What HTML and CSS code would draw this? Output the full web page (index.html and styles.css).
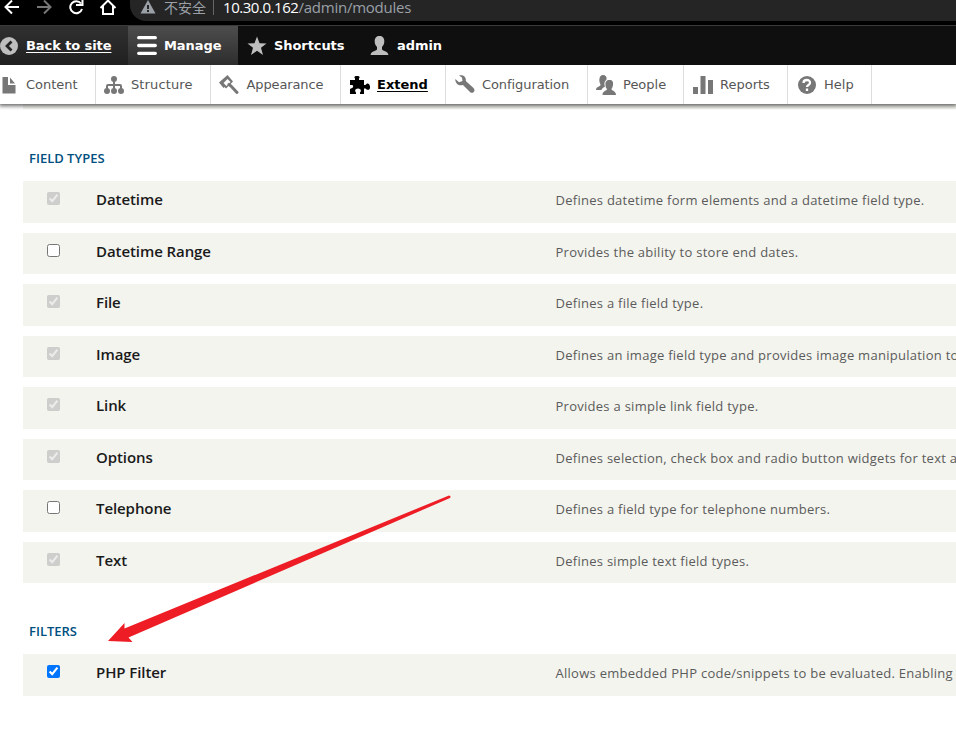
FILE: index.html
```html
<!DOCTYPE html>
<html lang="en">
<head>
<meta charset="utf-8">
<title>Extend</title>
<link rel="stylesheet" href="styles.css">
</head>
<body>
<header class="browser">
  <svg class="nav-icons" width="130" height="25" viewBox="0 0 130 25" fill="none" stroke="#fff" stroke-width="2">
    <path d="M19 7H6M12 .5L5.500 7l6.500 6.500"/>
    <path stroke="#777" d="M37 7h13M44 .5L50.500 7 44 13.500"/>
    <path d="M81 3.500A6 6 0 1 0 82 9M82.500-1v6H76"/>
    <path d="M100.500 8L108 .5l7.500 7.500M103 6v8h10V6"/>
  </svg>
  <div class="address">
    <svg width="16" height="14" viewBox="0 0 16 14"><path fill="#9aa0a6" d="M8 0l7.500 13.500H.5z"/><path stroke="#252526" stroke-width="2" d="M8 5v4M8 10v2"/></svg>
    <span class="insecure">不安全</span><span class="bar"></span>
    <span class="url"><b>10.30.0.162</b>/admin/modules</span>
  </div>
</header>
<nav class="adminbar">
  <a class="tab back"><svg width="18" height="18" viewBox="0 0 18 18"><circle cx="9" cy="9" r="9" fill="#bebebe"/><path d="M11.500 4.500L7 9l4.500 4.500" fill="none" stroke="#222" stroke-width="2.800"/></svg><span class="u">Back to site</span></a>
  <a class="tab manage"><svg width="20" height="19" viewBox="0 0 20 19"><path d="M1.700 1.700h16.600M1.700 9.500h16.600M1.700 17.300h16.600" stroke="#fff" stroke-width="3.300" stroke-linecap="round"/></svg><span>Manage</span></a>
  <a class="tab shortcuts"><svg width="20" height="20" viewBox="0 0 20 20"><path fill="#bebebe" d="M10 .5l2.500 6.700 7 .2-5.500 4.400 2 7.200-6-4.200-6 4.200 2-7.200L.5 7.400l7-.2z"/></svg><span>Shortcuts</span></a>
  <a class="tab user"><svg width="19" height="19" viewBox="0 0 19 19"><path fill="#bebebe" d="M9.500 0c3 0 5 2 4.800 5.500-.1 2.500-1 4-2.300 5.500v2.500c0 1 6 1.500 6.500 5.500H.5c.5-4 6.500-4.500 6.500-5.500V11C5.700 9.500 4.800 8 4.700 5.500 4.500 2 6.500 0 9.500 0z"/></svg><span>admin</span></a>
</nav>
<nav class="tray">
  <a class="item content"><svg width="16" height="18" viewBox="0 0 16 18" fill="#777"><path d="M2.500 1H8v8h7.500v8.500h-13zM10 1.500L15 7.500h-5z"/></svg><span>Content</span></a>
  <a class="item structure"><svg width="20" height="18" viewBox="0 0 20 18" fill="#777"><circle cx="10" cy="3" r="3"/><path d="M9 4h2v4h5q2 0 2 2v3h-2v-3h-5v3H9v-3H4v3H2v-3q0-2 2-2h5z"/><circle cx="3" cy="15" r="3"/><circle cx="10" cy="15" r="3"/><circle cx="17" cy="15" r="3"/></svg><span>Structure</span></a>
  <a class="item appearance"><svg width="20" height="20" viewBox="0 0 20 20"><path d="M0 7.500L8.500 0 14 6.500 7 13.500 5.500 12 4.500 13z" fill="#777"/><path d="M4.500 8L8.500 4l3 3-4 4z" fill="#fff"/><path d="M10 9.500l2 1.500 6 6.500" fill="none" stroke="#777" stroke-width="3" stroke-linecap="round"/></svg><span>Appearance</span></a>
  <a class="item extend"><svg width="20" height="18" viewBox="0 0 20 18"><path d="M0 4h5V2.500C3.500 1 5 0 7 0s3.500 1 2 2.500V4h5v5h1.500c1-2 4-2.500 4.500 1.500s-3 4-4.500 2H14V18h-4v-1.500c1.500-1.500 1-4-2-4s-3.500 2.500-2 4V18H0v-5l2-1c2-1 1-3 0-3L0 9z"/></svg><span class="u">Extend</span></a>
  <a class="item configuration"><svg width="20" height="19" viewBox="0 0 20 19"><path fill="#777" d="M4 .5C8-.8 11.500 2 10.800 6L18.500 13c2.800 3-1 6.500-3.500 4L8 10C4 11.500 0 8 .3 4L4 7.200 7.500 6 7 2.500z"/></svg><span>Configuration</span></a>
  <a class="item people"><svg width="20" height="20" viewBox="0 0 20 20" fill="#777"><path d="M7 0c2.500 0 4 1.500 3.500 4.500C8 6.500 8 9.500 9 11.500c-1.500 1-3 1.500-3.500 3.500H0c0-4 5-3 4.500-5.500C2.500 6 3 0 7 0z"/><path d="M13.500 5c3 0 4 2 3.500 5-.3 2-1 3-1.500 4 0 2 4.500 1.500 4.500 6H6.500c0-4.500 4.500-4 4.500-6-1-1-1.500-2-1.500-4-.5-3 1-5 4-5z"/></svg><span>People</span></a>
  <a class="item reports"><svg width="20" height="18" viewBox="0 0 20 18" fill="#777"><path d="M0 11h5v7H0zM7.500 0h5v18h-5zM15 4h5v14h-5z"/></svg><span>Reports</span></a>
  <a class="item help"><svg width="18" height="18" viewBox="0 0 18 18"><circle cx="9" cy="9" r="9" fill="#777"/><path d="M5.500 7C5.500 3 12.500 3 12 7c-.2 2-3 2-3 4M9 12.500V15" fill="none" stroke="#fff" stroke-width="2.300"/></svg><span>Help</span></a>
</nav>
<main class="page">
  <div class="previous"></div>
  <h2>FIELD TYPES</h2>
  <section class="modules">
    <div class="row"><input type="checkbox" checked disabled><label>Datetime</label><p>Defines datetime form elements and a datetime field type.</p></div>
    <div class="row"><input type="checkbox"><label>Datetime Range</label><p>Provides the ability to store end dates.</p></div>
    <div class="row"><input type="checkbox" checked disabled><label>File</label><p>Defines a file field type.</p></div>
    <div class="row"><input type="checkbox" checked disabled><label>Image</label><p>Defines an image field type and provides image manipulation tools.</p></div>
    <div class="row"><input type="checkbox" checked disabled><label>Link</label><p>Provides a simple link field type.</p></div>
    <div class="row"><input type="checkbox" checked disabled><label>Options</label><p>Defines selection, check box and radio button widgets for text and numeric fields.</p></div>
    <div class="row"><input type="checkbox"><label>Telephone</label><p>Defines a field type for telephone numbers.</p></div>
    <div class="row"><input type="checkbox" checked disabled><label>Text</label><p>Defines simple text field types.</p></div>
  </section>
  <h2 class="second">FILTERS</h2>
  <section class="modules">
    <div class="row"><input type="checkbox" checked><label>PHP Filter</label><p>Allows embedded PHP code/snippets to be evaluated. Enabling this</p></div>
  </section>
</main>
<svg class="arrow" width="956" height="734" viewBox="0 0 956 734"><path fill="#ee1c25" d="M108 641l16.500-18v5.500L449 495.500q2.500.5 1 2.500L128.500 637.500l4 4.500z"/></svg>
</body>
</html>
```
FILE: styles.css
```css
* { box-sizing: border-box; }
body { margin: 0; width: 956px; height: 734px; overflow: hidden; position: relative; background: #fff; font-family: "DejaVu Sans", sans-serif; }
svg { display: block; flex: none; }
.browser { height: 26px; background: #000; border-bottom: 1px solid #3a3a3a; display: flex; align-items: flex-start; }
.address { width: 840px; height: 21px; background: #252526; border-bottom-left-radius: 16px; display: flex; padding-left: 10px; flex: none; color: #9aa0a6; }
.insecure { font: 14px/14px "Noto Sans CJK SC", sans-serif; margin-left: 8px; }
.bar { width: 1px; height: 15px; background: #666; margin: 0 9px 0 7px; }
.url { font: 15px/14px "Open Sans", "Noto Sans", sans-serif; letter-spacing: -.25px; }
.url b { font-weight: 400; color: #fff; letter-spacing: -.45px; }
.adminbar { height: 39px; background: #0f0f0f; display: flex; color: #fff; font-size: 13px; font-weight: bold; letter-spacing: -.08px; }
.tab { display: flex; align-items: center; white-space: nowrap; }
.tab span { margin-bottom: 1px; }
.back { width: 128px; gap: 8px; background: linear-gradient(#303030, #202020); }
.manage { width: 110px; padding-left: 9px; gap: 7px; background: linear-gradient(#4d4d4d, #2d2d2d); }
.shortcuts { width: 132px; padding-left: 9px; gap: 7px; }
.user { gap: 8px; }
.u { text-decoration: underline; text-underline-offset: 2px; }
.tray { position: relative; height: 39px; background: #fff; display: flex; color: #565656; font-size: 13px; box-shadow: 0 1px 4px 1px rgba(0,0,0,.6); clip-path: inset(0 0 -6px 0); }
.item { display: flex; align-items: center; border-right: 1px solid #ddd; white-space: nowrap; flex: none; }
.item span { margin-bottom: 1px; }
.content { width: 96px; gap: 10px; }
.structure { width: 115px; padding-left: 8px; gap: 7px; letter-spacing: .12px; }
.appearance { width: 130px; padding-left: 8px; gap: 7.500px; letter-spacing: -.12px; }
.extend { width: 105px; padding-left: 9px; gap: 7px; color: #000; font-weight: bold; }
.configuration { width: 142px; padding-left: 9px; gap: 7px; letter-spacing: -.08px; }
.people { width: 96px; padding-left: 8px; gap: 7px; }
.reports { width: 104px; padding-left: 9px; gap: 7px; }
.help { width: 84px; padding-left: 10px; gap: 8px; }
.page { padding-left: 23px; font-family: "Open Sans", "Noto Sans", sans-serif; }
.previous { height: 5px; background: #f3f4ee; }
h2 { margin: 0; padding: 40px 0 0 6px; height: 72px; font-size: 13px; line-height: 18px; font-weight: 600; color: #004f80; }
h2.second { padding-top: 39px; height: 71px; }
.modules { display: flex; flex-direction: column; gap: 10px; }
.row { height: 41.5px; background: #f3f4ee; display: grid; grid-template-columns: 73px 459.500px 1fr; align-items: start; overflow: hidden; }
.row input { margin: 11px 0 0 24px; width: 13px; height: 13px; }
.row label { font-size: 15px; line-height: 20px; padding-top: 8px; font-weight: 600; color: #1a1a1a; letter-spacing: -.08px; }
.row p { margin: 0; padding-top: 9px; font-size: 13px; line-height: 20px; letter-spacing: .27px; color: #5b5b5b; white-space: nowrap; }
.arrow { position: absolute; inset: 0; pointer-events: none; }
```
